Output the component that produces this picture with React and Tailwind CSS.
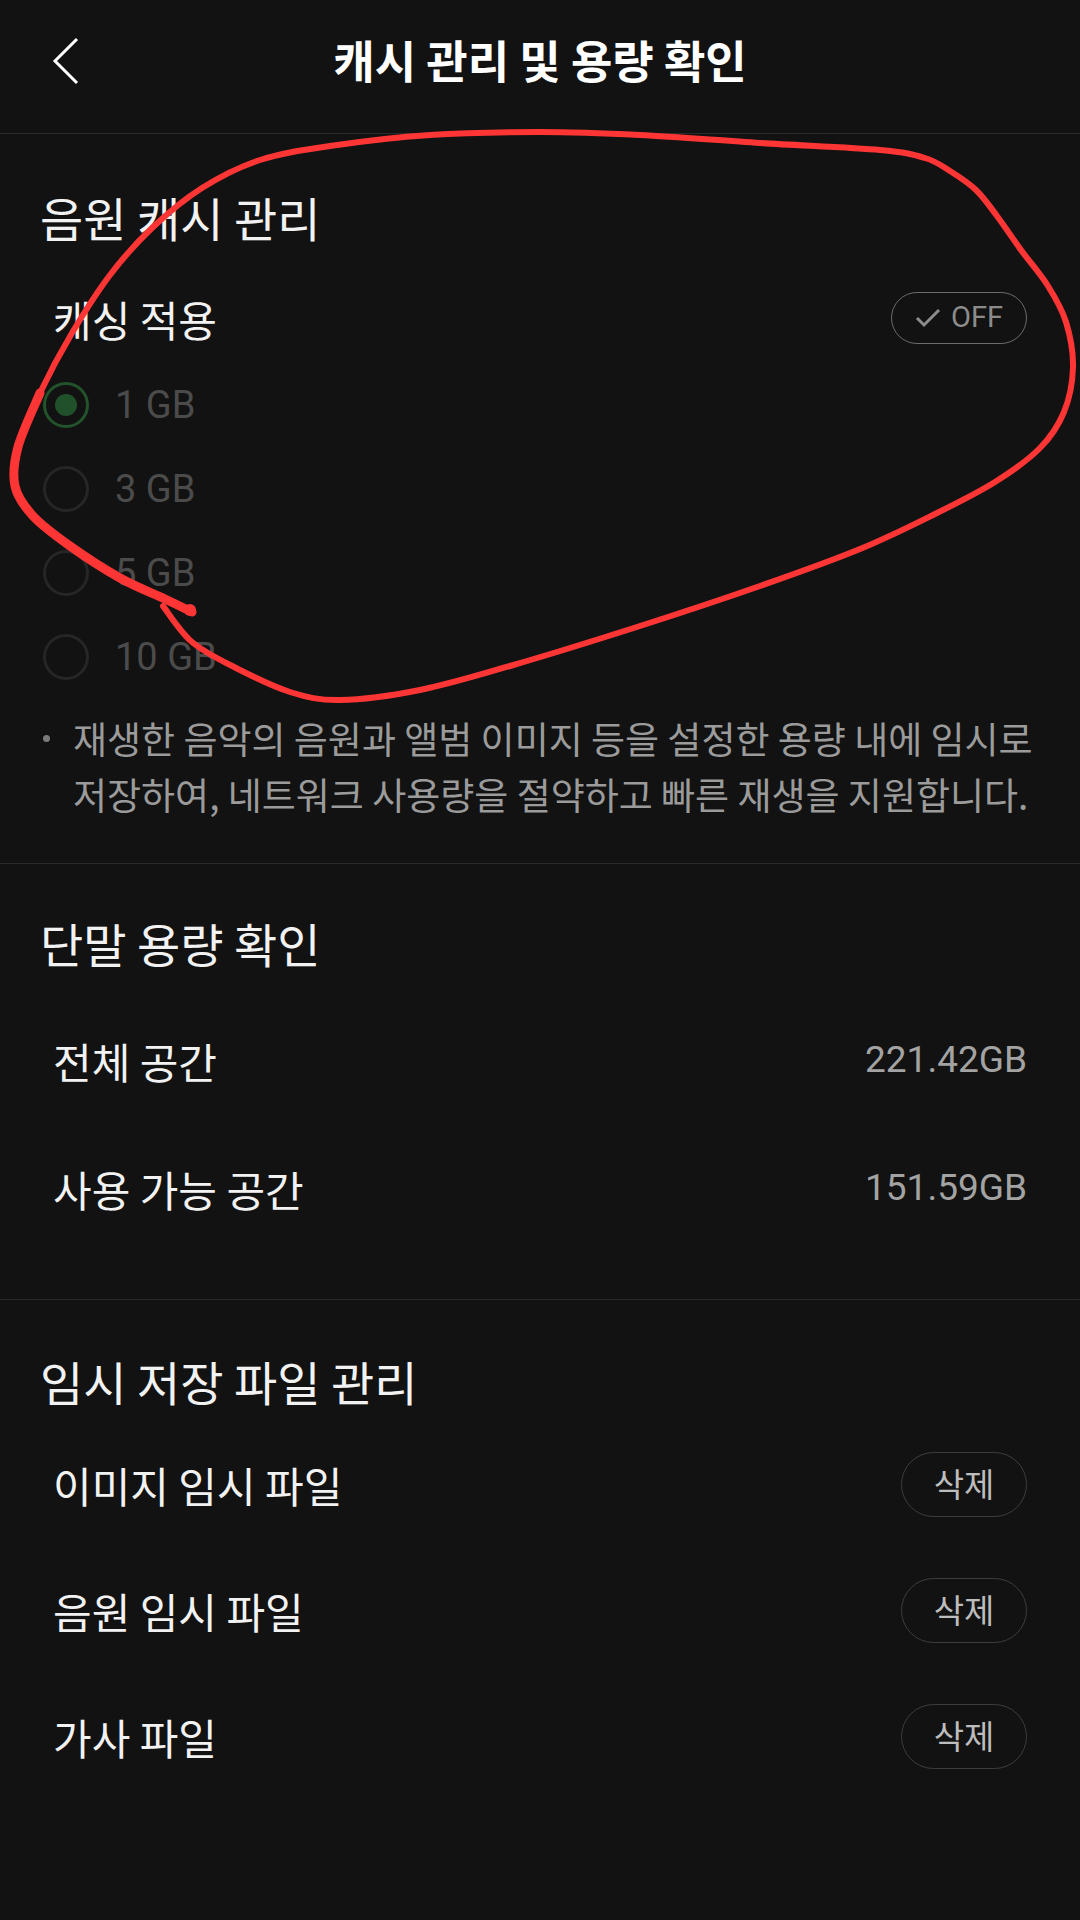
import { useState } from "react";

const KR = { fontFamily: '"Noto Sans CJK KR", "Noto Sans", sans-serif' };
const NUM = { fontFamily: 'Roboto, "Noto Sans CJK KR", sans-serif' };

const SIZES = ["1 GB", "3 GB", "5 GB", "10 GB"];

// red hand-drawn loop over the cache section (part of the screenshot)
const LOOP = [
  [163, 606], [192, 642], [236, 668], [290, 692], [340, 700], [420, 690], [510, 666],
  [640, 626], [760, 586], [860, 549], [935, 514], [995, 482], [1040, 448], [1064, 412],
  [1073, 367], [1066, 322], [1048, 286], [1021, 250], [997, 216], [976, 190], [950, 171],
  [925, 158], [880, 150], [760, 143], [640, 135], [540, 132], [430, 135], [330, 146],
  [260, 160], [202, 188], [152, 228], [110, 275], [72, 333], [40, 393], [18, 447],
  [15, 486], [33, 516], [70, 546], [120, 578], [165, 599], [192, 612],
];

function smoothPath(pts) {
  let d = `M${pts[0][0]} ${pts[0][1]}`;
  for (let i = 0; i < pts.length - 1; i++) {
    const p0 = pts[i - 1] || pts[i];
    const p1 = pts[i];
    const p2 = pts[i + 1];
    const p3 = pts[i + 2] || p2;
    const c1x = p1[0] + (p2[0] - p0[0]) / 6;
    const c1y = p1[1] + (p2[1] - p0[1]) / 6;
    const c2x = p2[0] - (p3[0] - p1[0]) / 6;
    const c2y = p2[1] - (p3[1] - p1[1]) / 6;
    d += ` C${c1x} ${c1y} ${c2x} ${c2y} ${p2[0]} ${p2[1]}`;
  }
  return d;
}

function Radio({ checked }) {
  return (
    <div
      className={`w-[46px] h-[46px] rounded-full border-[3px] flex items-center justify-center ${
        checked ? "border-[#22532a]" : "border-[#262626]"
      }`}
    >
      {checked && <div className="w-[22px] h-[22px] rounded-full bg-[#21512a]" />}
    </div>
  );
}

function SectionTitle({ children }) {
  return (
    <div className="h-[80px] flex items-center pl-[40px] text-[47px] text-[#f2f2f2]" style={KR}>
      {children}
    </div>
  );
}

function DeleteRow({ label }) {
  return (
    <div className="h-[126px] flex items-center justify-between pl-[53px] pr-[53px]">
      <span className="text-[42px] text-[#f2f2f2]" style={KR}>{label}</span>
      <button
        className="w-[126px] h-[65px] rounded-full border-[1.5px] border-[#3d3d3d] flex items-center justify-center text-[33px] text-[#bdbdbd]"
        style={KR}
      >
        삭제
      </button>
    </div>
  );
}

export default function App() {
  const [size, setSize] = useState(0);

  return (
    <div className="relative w-full min-h-screen bg-[#121212] overflow-hidden">
      {/* header */}
      <header className="relative h-[134px] border-b border-[#2a2a2a] flex items-center justify-center pb-[14px]">
        <svg className="absolute left-[50px] top-[37px]" width="30" height="48" viewBox="0 0 30 48">
          <path d="M27 2 L5 24 L27 46" fill="none" stroke="#fff" strokeWidth="3" />
        </svg>
        <h1 className="text-[45px] font-bold text-white" style={KR}>
          캐시 관리 및 용량 확인
        </h1>
      </header>

      {/* 음원 캐시 관리 */}
      <section className="border-b border-[#2a2a2a] pt-[43px] pb-[41px]">
        <SectionTitle>음원 캐시 관리</SectionTitle>
        <div className="mt-[16px] h-[90px] flex items-center justify-between pl-[53px] pr-[53px]">
          <span className="text-[42px] text-[#f2f2f2]" style={KR}>캐싱 적용</span>
          <div className="w-[136px] h-[52px] rounded-full border-[1.5px] border-[#6b6b6b] flex items-center justify-center gap-[10px]">
            <svg width="26" height="20" viewBox="0 0 26 20">
              <path d="M2 10 L9 17 L24 2" fill="none" stroke="#8c8c8c" strokeWidth="3" />
            </svg>
            <span className="text-[29px] text-[#8c8c8c]" style={NUM}>OFF</span>
          </div>
        </div>
        {SIZES.map((s, i) => (
          <div
            key={s}
            onClick={() => setSize(i)}
            className="h-[84px] flex items-center gap-[26px] pl-[43px]"
          >
            <Radio checked={size === i} />
            <span className="text-[38px] text-[#4b4b4b]" style={NUM}>{s}</span>
          </div>
        ))}
        <div className="mt-[11px] flex pl-[43px] pr-[20px]">
          <div className="w-[7px] h-[7px] rounded-full bg-[#7a7a7a] mt-[25px] shrink-0" />
          <p className="ml-[23px] text-[37px] leading-[56px] text-[#9b9b9b]" style={KR}>
            <span className="block whitespace-nowrap">재생한 음악의 음원과 앨범 이미지 등을 설정한 용량 내에 임시로</span>
            <span className="block whitespace-nowrap">저장하여, 네트워크 사용량을 절약하고 빠른 재생을 지원합니다.</span>
          </p>
        </div>
      </section>

      {/* 단말 용량 확인 */}
      <section className="border-b border-[#2a2a2a] pt-[39px] pb-[47px]">
        <SectionTitle>단말 용량 확인</SectionTitle>
        <div className="pt-[13px]">
          {[
            ["전체 공간", "221.42GB"],
            ["사용 가능 공간", "151.59GB"],
          ].map(([label, value]) => (
            <div key={label} className="h-[128px] flex items-center justify-between pl-[53px] pr-[53px]">
              <span className="text-[42px] text-[#f2f2f2]" style={KR}>{label}</span>
              <span className="text-[37px] text-[#a3a3a3]" style={NUM}>{value}</span>
            </div>
          ))}
        </div>
      </section>

      {/* 임시 저장 파일 관리 */}
      <section className="pt-[41px]">
        <SectionTitle>임시 저장 파일 관리</SectionTitle>
        <DeleteRow label="이미지 임시 파일" />
        <DeleteRow label="음원 임시 파일" />
        <DeleteRow label="가사 파일" />
      </section>

      {/* annotation */}
      <svg
        className="absolute left-0 top-0 pointer-events-none"
        width="1080"
        height="1920"
        viewBox="0 0 1080 1920"
      >
        <path d={smoothPath(LOOP)} fill="none" stroke="#fd3535" strokeWidth="6" strokeLinecap="round" strokeLinejoin="round" />
        <path d={smoothPath(LOOP.slice(33))} fill="none" stroke="#fd3535" strokeWidth="9" strokeLinecap="round" strokeLinejoin="round" />
        <circle cx="190" cy="610" r="6" fill="#fd3535" />
      </svg>
    </div>
  );
}
